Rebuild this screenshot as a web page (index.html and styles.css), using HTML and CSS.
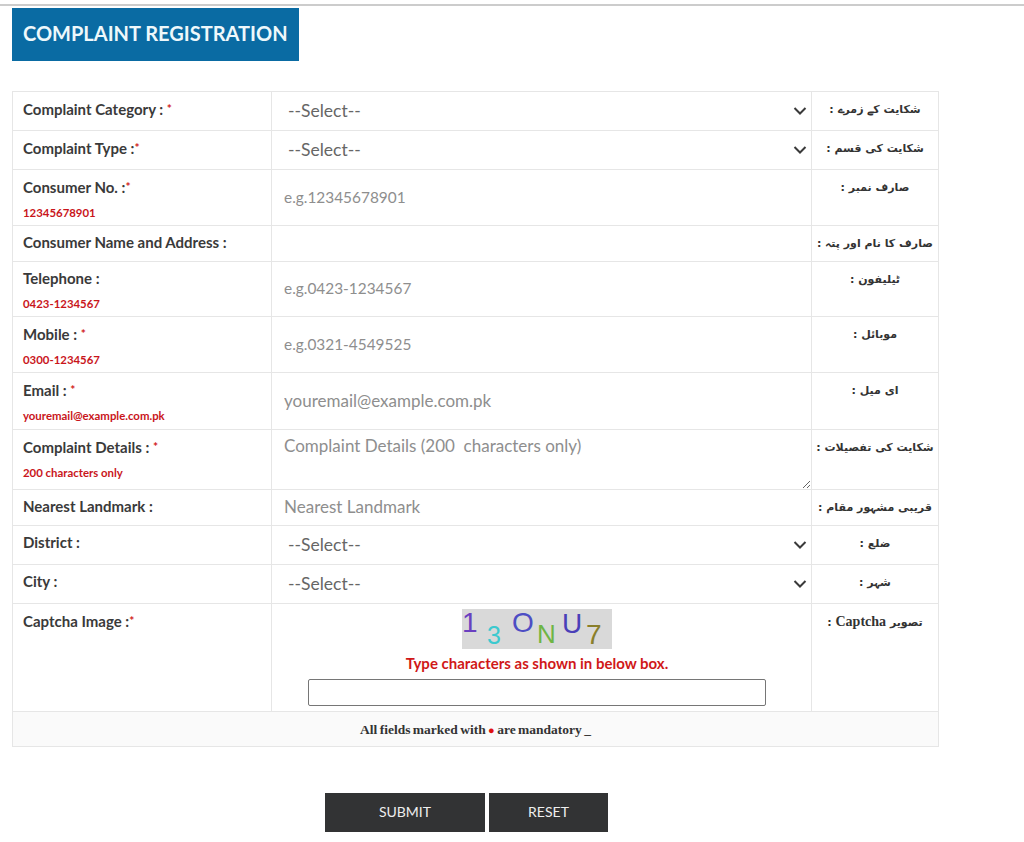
FILE: index.html
```html
<!DOCTYPE html>
<html lang="en">
<head>
    <meta charset="UTF-8">
    <meta name="viewport" content="width=device-width, initial-scale=1.0">
    <title>Complaint Registration</title>
    <link rel="stylesheet" href="styles.css">
</head>
<body>
    <div class="page">
        <h1 class="title">COMPLAINT REGISTRATION</h1>

        <table class="form-table">
            <colgroup>
                <col class="col-label">
                <col class="col-field">
                <col class="col-urdu">
            </colgroup>
            <tr class="row-39">
                <td class="label">Complaint Category : <span class="star">*</span></td>
                <td class="field">
                    <div class="select-wrap">
                        <select><option>--Select--</option></select>
                        <svg class="chevron" viewBox="0 0 14 8"><path d="M1.5 1l5.5 5.5L12.5 1"/></svg>
                    </div>
                </td>
                <td class="urdu" dir="rtl">شکایت کے زمرے :</td>
            </tr>
            <tr class="row-39">
                <td class="label">Complaint Type :<span class="star">*</span></td>
                <td class="field">
                    <div class="select-wrap">
                        <select><option>--Select--</option></select>
                        <svg class="chevron" viewBox="0 0 14 8"><path d="M1.5 1l5.5 5.5L12.5 1"/></svg>
                    </div>
                </td>
                <td class="urdu" dir="rtl">شکایت کی قسم :</td>
            </tr>
            <tr class="row-56">
                <td class="label">Consumer No. :<span class="star">*</span><div class="hint">12345678901</div></td>
                <td class="field"><input class="num" type="text" placeholder="e.g.12345678901"></td>
                <td class="urdu" dir="rtl">صارف نمبر :</td>
            </tr>
            <tr class="row-36">
                <td class="label">Consumer Name and Address :</td>
                <td class="field"></td>
                <td class="urdu" dir="rtl">صارف کا نام اور پتہ :</td>
            </tr>
            <tr class="row-55">
                <td class="label">Telephone :<div class="hint">0423-1234567</div></td>
                <td class="field"><input class="num" type="text" placeholder="e.g.0423-1234567"></td>
                <td class="urdu" dir="rtl">ٹیلیفون :</td>
            </tr>
            <tr class="row-56">
                <td class="label">Mobile : <span class="star">*</span><div class="hint">0300-1234567</div></td>
                <td class="field"><input class="num" type="text" placeholder="e.g.0321-4549525"></td>
                <td class="urdu" dir="rtl">موبائل :</td>
            </tr>
            <tr class="row-57">
                <td class="label">Email : <span class="star">*</span><div class="hint">youremail@example.com.pk</div></td>
                <td class="field"><input type="text" placeholder="youremail@example.com.pk"></td>
                <td class="urdu" dir="rtl">ای میل :</td>
            </tr>
            <tr class="row-60">
                <td class="label">Complaint Details : <span class="star">*</span><div class="hint">200 characters only</div></td>
                <td class="field"><textarea placeholder="Complaint Details (200  characters only)"></textarea></td>
                <td class="urdu" dir="rtl">شکایت کی تفصیلات :</td>
            </tr>
            <tr class="row-36">
                <td class="label">Nearest Landmark :</td>
                <td class="field"><input type="text" placeholder="Nearest Landmark"></td>
                <td class="urdu" dir="rtl">قریبی مشہور مقام :</td>
            </tr>
            <tr class="row-39">
                <td class="label">District :</td>
                <td class="field">
                    <div class="select-wrap">
                        <select><option>--Select--</option></select>
                        <svg class="chevron" viewBox="0 0 14 8"><path d="M1.5 1l5.5 5.5L12.5 1"/></svg>
                    </div>
                </td>
                <td class="urdu" dir="rtl">ضلع :</td>
            </tr>
            <tr class="row-39">
                <td class="label">City :</td>
                <td class="field">
                    <div class="select-wrap">
                        <select><option>--Select--</option></select>
                        <svg class="chevron" viewBox="0 0 14 8"><path d="M1.5 1l5.5 5.5L12.5 1"/></svg>
                    </div>
                </td>
                <td class="urdu" dir="rtl">شہر :</td>
            </tr>
            <tr class="row-108">
                <td class="label">Captcha Image :<span class="star">*</span></td>
                <td class="captcha-cell">
                    <svg class="captcha" viewBox="0 0 150 40">
                        <rect width="150" height="40" fill="#d9d9d9"/>
                        <text x="0" y="23" font-size="28" fill="#6a3fc0">1</text>
                        <text x="25" y="35" font-size="25" fill="#3cc9cf">3</text>
                        <text x="50" y="23" font-size="28" fill="#4d4dc4">O</text>
                        <text x="75" y="34" font-size="26" fill="#6fb545">N</text>
                        <text x="100" y="24" font-size="28" fill="#4a3fb8">U</text>
                        <text x="124" y="35" font-size="28" fill="#8a7f2a">7</text>
                    </svg>
                    <div class="captcha-note">Type characters as shown in below box.</div>
                    <input class="captcha-input" type="text">
                </td>
                <td class="urdu" dir="rtl">تصویر <b class="latin">Captcha</b> :</td>
            </tr>
            <tr class="row-35 note-row">
                <td colspan="3">All fields marked with <span class="dot">●</span> are mandatory _</td>
            </tr>
        </table>

        <div class="buttons">
            <button class="btn btn-submit">SUBMIT</button>
            <button class="btn btn-reset">RESET</button>
        </div>
    </div>
</body>
</html>
```

FILE: styles.css
```css
body {
    margin: 0;
    background-color: white;
    font-family: Lato, "Open Sans", sans-serif;
    color: #333;
}
.page {
    border-top: 2px solid #ccc;
    margin-top: 4px;
    padding: 2px 0 0 12px;
}
.title {
    width: 287px;
    height: 53px;
    margin: 0;
    box-sizing: border-box;
    padding-left: 11px;
    background-color: #0a6ba3;
    color: #eef8fb;
    font-size: 20px;
    font-weight: bold;
    line-height: 50px;
}
.form-table {
    margin-top: 30px;
    width: 927px;
    table-layout: fixed;
    border-collapse: collapse;
}
.col-label { width: 259px; }
.col-field { width: 540px; }
.col-urdu { width: 127px; }
.form-table td {
    border: 1px solid #e6e6e6;
    padding: 0;
    vertical-align: top;
}
.row-35 { height: 35px; }
.row-36 { height: 36px; }
.row-39 { height: 39px; }
.row-55 { height: 55px; }
.row-56 { height: 56px; }
.row-57 { height: 57px; }
.row-60 { height: 60px; }
.row-108 { height: 108px; }

.form-table .label {
    padding: 8px 0 0 10px;
    font-size: 15px;
    font-weight: bold;
    line-height: 17px;
    color: #3a3a3a;
}
.star {
    color: #d11a1a;
    font-size: 12px;
    vertical-align: 2px;
}
.hint {
    margin-top: 10px;
    font-size: 11.4px;
    line-height: 13px;
    color: #c9151b;
}
.form-table .field {
    vertical-align: middle;
}
.field input,
.field textarea {
    display: block;
    width: 100%;
    box-sizing: border-box;
    border: 0;
    outline: 0;
    padding: 0 12px 2px;
    background: transparent;
    font-family: Lato, "Open Sans", sans-serif;
    font-size: 17px;
    color: #555;
}
.field input.num {
    font-size: 15.4px;
}
.field input::placeholder,
.field textarea::placeholder {
    color: #8e8e8e;
    opacity: 1;
}
.field textarea {
    height: 58px;
    padding-top: 5px;
    line-height: 20px;
}
.select-wrap {
    position: relative;
}
.select-wrap select {
    display: block;
    width: 100%;
    height: 38px;
    border: 0;
    outline: 0;
    padding: 0 16px 2px;
    background: transparent;
    appearance: none;
    font-family: Lato, "Open Sans", sans-serif;
    font-size: 17.5px;
    color: #666;
}
.chevron {
    position: absolute;
    top: 15px;
    right: 4px;
    width: 14px;
    height: 8px;
    fill: none;
    stroke: #3a3a3a;
    stroke-width: 2;
}
.form-table .urdu {
    padding-top: 10px;
    text-align: center;
    white-space: nowrap;
    font-family: "DejaVu Sans", sans-serif;
    font-size: 11px;
    font-weight: bold;
    line-height: 16px;
    color: #333;
}
.latin {
    font-family: "Liberation Serif", serif;
    font-size: 14px;
}
.form-table .captcha-cell {
    text-align: center;
    padding: 5px 9px 0 0;
}
.captcha {
    display: block;
    width: 150px;
    height: 40px;
    margin: 0 auto;
    overflow: visible;
    font-family: "Liberation Sans", sans-serif;
}
.captcha-note {
    margin-top: 5px;
    font-size: 15px;
    font-weight: bold;
    line-height: 18px;
    color: #d01818;
}
.captcha-input {
    display: block;
    width: 458px;
    height: 27px;
    box-sizing: border-box;
    margin: 7px auto 0;
    border: 1px solid #767676;
    border-radius: 2px;
    background: white;
}
.form-table .note-row td {
    padding-top: 1px;
    background-color: #fafafa;
    text-align: center;
    vertical-align: middle;
    font-family: "Liberation Serif", serif;
    font-size: 13.5px;
    font-weight: bold;
    word-spacing: -1px;
    color: #333;
}
.dot {
    color: #e01010;
    font-size: 11px;
}
.buttons {
    display: flex;
    gap: 4px;
    margin: 46px 0 0 313px;
}
.btn {
    height: 39px;
    padding: 0 0 2px;
    border: 0;
    background-color: #323334;
    color: #eee;
    font-family: Lato, "Open Sans", sans-serif;
    font-size: 14px;
}
.btn-submit { width: 160px; }
.btn-reset { width: 119px; }
```
